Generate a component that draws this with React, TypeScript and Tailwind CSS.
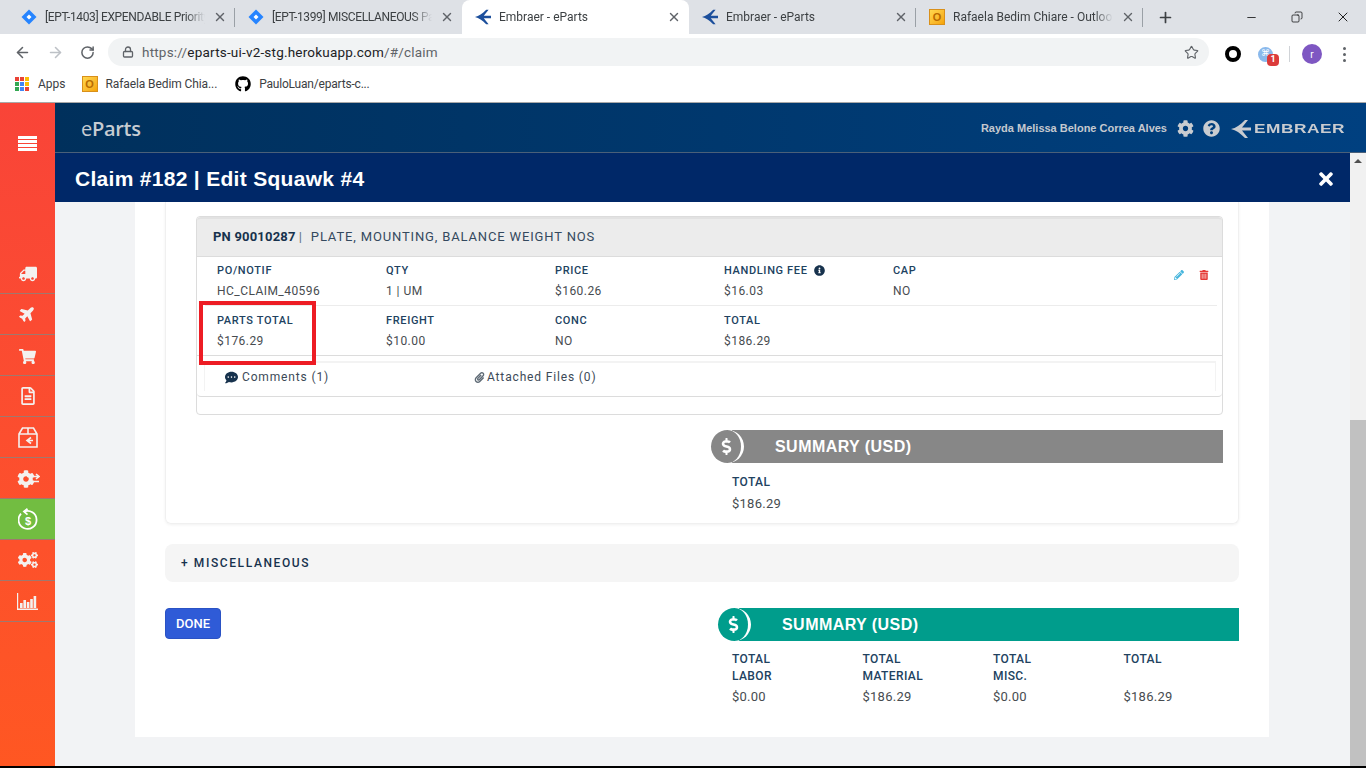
import type { ReactNode } from "react";
import { ArrowLeft, ArrowRight, RotateCw, Lock, Star, X, Plus, Minus, Copy } from "lucide-react";
import {
  FaTruck, FaPlane, FaShoppingCart, FaRegFileAlt, FaCog, FaCogs,
  FaQuestionCircle, FaTimes, FaInfoCircle, FaPencilAlt, FaTrashAlt, FaCommentDots, FaPaperclip, FaGithub, FaDollarSign,
} from "react-icons/fa";

function JiraIcon() {
  return (
    <svg width="16" height="16" viewBox="0 0 16 16" className="shrink-0">
      <path d="M8 0.5 15.5 8 8 15.5 0.5 8Z" fill="#2684ff" />
      <path d="M8 5.5 10.5 8 8 10.5 5.5 8Z" fill="#fff" />
    </svg>
  );
}

function EmbraerArrow({ color = "#1c4f9c", className = "w-4 h-4" }: { color?: string; className?: string }) {
  return (
    <svg viewBox="0 0 20 18" className={`${className} shrink-0`}>
      <path d="M0 9 C5 8 9 5 14 0 H17 L11 7.5 H20 V10.5 H11 L17 18 H14 C9 13 5 10 0 9Z" fill={color} />
    </svg>
  );
}

function OutlookIcon() {
  return (
    <span className="w-4 h-4 shrink-0 flex items-center justify-center border border-[#d9901a] bg-gradient-to-br from-[#ffd84d] to-[#f5a400] text-[11px] font-bold text-[#b86a00] font-['Liberation_Sans',sans-serif]">
      O
    </span>
  );
}

function Tab({ icon, title, active, sep, tight }: { icon: ReactNode; title: string; active?: boolean; sep?: boolean; tight?: boolean }) {
  return (
    <div className={`relative w-[227px] h-[34px] flex items-center pl-[13px] pr-[8px] gap-[8px] shrink-0 ${active ? "bg-white rounded-t-lg" : ""}`}>
      {icon}
      <span className={`flex-1 overflow-hidden whitespace-nowrap text-xs text-[#3c4043] [mask-image:linear-gradient(to_right,black_88%,transparent)] ${tight ? "tracking-[-0.35px]" : ""}`}>
        {title}
      </span>
      <X size={14} strokeWidth={2.4} className="text-[#5f6368] shrink-0" />
      {sep && <span className="absolute right-0 top-[8px] h-[19px] w-px bg-[#9aa0a6]" />}
    </div>
  );
}

function BrowserChrome() {
  return (
    <div className="shrink-0 font-['Roboto',sans-serif]">
      <div className="h-[34px] bg-[#dee1e6] flex items-center pl-[8px]">
        <Tab icon={<JiraIcon />} title="[EPT-1403] EXPENDABLE Priority" sep tight />
        <Tab icon={<JiraIcon />} title="[EPT-1399] MISCELLANEOUS Parts" tight />
        <Tab icon={<EmbraerArrow />} title="Embraer - eParts" active />
        <Tab icon={<EmbraerArrow />} title="Embraer - eParts" sep />
        <Tab icon={<OutlookIcon />} title="Rafaela Bedim Chiare - Outlook" sep />
        <Plus size={17} strokeWidth={2.4} className="ml-[14px] text-[#3c4043]" />
        <div className="ml-auto flex items-center text-black">
          <span className="w-[46px] flex justify-center"><Minus size={13} strokeWidth={1.4} /></span>
          <span className="w-[46px] flex justify-center"><Copy size={12} strokeWidth={1.4} className="-scale-x-100" /></span>
          <span className="w-[46px] flex justify-center"><X size={16} strokeWidth={1.3} /></span>
        </div>
      </div>
      <div className="h-[32px] bg-white flex items-start">
        <div className="h-[28px] mt-[4px] flex items-center w-[108px] pl-[14px] gap-[16px]">
          <ArrowLeft size={17} strokeWidth={2.2} className="text-[#5f6368]" />
          <ArrowRight size={17} strokeWidth={2.2} className="text-[#bdc1c6]" />
          <RotateCw size={15} strokeWidth={2.4} className="text-[#5f6368]" />
        </div>
        <div className="mt-[4px] h-[28px] w-[1101px] rounded-full bg-[#f1f3f4] flex items-center pl-[14px] pr-[10px]">
          <Lock size={12} strokeWidth={2.6} className="text-[#5f6368]" />
          <span className="ml-[8px] text-[13.5px] text-[#5f6368] tracking-[0.2px]">
            <span>https://</span><span className="text-[#202124]">eparts-ui-v2-stg.herokuapp.com</span><span>/#/claim</span>
          </span>
          <Star size={15} strokeWidth={1.8} className="ml-auto text-[#5f6368]" />
        </div>
        <div className="flex items-center h-[28px] mt-[6px]">
          <span className="ml-[16px] w-[16px] h-[16px] rounded-full border-[4px] border-black" />
          <span className="relative ml-[17px] w-[15px] h-[15px] rounded-full bg-[#8ab9ec] flex items-center justify-center text-[9px] text-white">
            ⌘
            <span className="absolute left-[9px] top-[7px] w-[12px] h-[12px] bg-[#db3b3b] rounded-sm text-white text-[9px] font-bold flex items-center justify-center leading-none">1</span>
          </span>
          <span className="ml-[16px] w-px h-[16px] bg-[#d0d3d7]" />
          <span className="ml-[12px] w-[20px] h-[20px] rounded-full bg-[#7e57c2] text-white text-[10px] flex items-center justify-center">r</span>
          <span className="ml-[21px] flex flex-col gap-[3px]">
            <span className="w-[3px] h-[3px] rounded-full bg-[#5f6368]" />
            <span className="w-[3px] h-[3px] rounded-full bg-[#5f6368]" />
            <span className="w-[3px] h-[3px] rounded-full bg-[#5f6368]" />
          </span>
        </div>
      </div>
      <div className="h-[36px] bg-white flex items-center pl-[15px] text-xs text-[#3c4043] border-b border-[#a8a8a8] box-content">
        <span className="grid grid-cols-3 gap-[1px] w-[14px] h-[14px]">
          {["bg-[#ea4335]", "bg-[#ea4335]", "bg-[#fbbc05]", "bg-[#34a853]", "bg-[#4285f4]", "bg-[#fbbc05]", "bg-[#34a853]", "bg-[#4285f4]", "bg-[#ea4335]"].map((c, i) => (
            <span key={i} className={c} />
          ))}
        </span>
        <span className="ml-[9px]">Apps</span>
        <span className="ml-[16px]"><OutlookIcon /></span>
        <span className="ml-[8px] tracking-[-0.1px]">Rafaela Bedim Chia...</span>
        <FaGithub size={16} className="ml-[18px] text-black" />
        <span className="ml-[8px] tracking-[-0.2px]">PauloLuan/eparts-c...</span>
      </div>
    </div>
  );
}

function BoxArrowIcon() {
  return (
    <svg width="20" height="21" viewBox="0 0 20 21" fill="none" stroke="#f4f1ef" strokeWidth="1.6">
      <path d="M1 7 4.5 1h11L19 7v13H1Z" />
      <path d="M1 7h18M10 1v6" />
      <path d="M13 10.5 9 13.5l4 3M9.5 13.5H15" />
    </svg>
  );
}

function GearArrowsIcon() {
  return (
    <span className="relative inline-block w-[22px] h-[18px] mt-px">
      <FaCog size={18} className="text-[#f4f1ef] absolute left-0 top-0" />
      <svg width="14" height="12" viewBox="0 0 14 12" className="absolute left-[9px] top-[3px]" stroke="#f4f1ef" strokeWidth="1.6" fill="none">
        <path d="M1 3.5h12M10 1l3 2.5L10 6M13 8.5H3M6 6 3 8.5 6 11" />
      </svg>
    </span>
  );
}

function DollarCycleIcon() {
  return (
    <svg width="20" height="22" viewBox="0 0 20 22" fill="none" stroke="#fff" strokeWidth="1.8">
      <path d="M6 3.6A9 9 0 1 1 3 5.7" />
      <path d="M9.5 0.8 6 3.6l3.5 3" />
      <text x="10" y="16.5" textAnchor="middle" fontSize="11" fontWeight="700" fill="#fff" stroke="none" fontFamily="Liberation Sans, sans-serif">$</text>
    </svg>
  );
}

function BarsIcon() {
  return (
    <svg width="21" height="17" viewBox="0 0 21 17" fill="#f4f1ef">
      <path d="M0 0h1.2v15.6H21V17H0Z" />
      <rect x="3" y="10" width="2.6" height="5" />
      <rect x="6.4" y="7" width="2.6" height="8" />
      <rect x="9.8" y="9" width="2.6" height="6" />
      <rect x="13.2" y="6" width="2.6" height="9" />
      <rect x="16.6" y="3" width="2.6" height="12" />
    </svg>
  );
}

const navItems: { icon: ReactNode; active?: boolean }[] = [
  { icon: <FaTruck size={18} className="-scale-x-100 mt-0.5" /> },
  { icon: <FaPlane size={17} className="-rotate-45 -mt-0.5" /> },
  { icon: <FaShoppingCart size={17} className="mt-0.5" /> },
  { icon: <FaRegFileAlt size={18} /> },
  { icon: <BoxArrowIcon /> },
  { icon: <GearArrowsIcon /> },
  { icon: <DollarCycleIcon />, active: true },
  { icon: <FaCogs size={20} /> },
  { icon: <BarsIcon /> },
];

function Sidebar() {
  return (
    <aside className="w-[55px] shrink-0 bg-gradient-to-b from-[#f94438] to-[#ff5722] text-[#f4f1ef]">
      <div className="h-[150px] pt-[33px] flex justify-center">
        <div className="w-[19px] h-[15px] flex flex-col gap-px">
          <span className="h-[3px] bg-white" />
          <span className="h-[3px] bg-white" />
          <span className="h-[3px] bg-white" />
          <span className="h-[3px] bg-white" />
        </div>
      </div>
      {navItems.map((item, i) => (
        <div
          key={i}
          className={`h-[41px] flex items-center justify-center border-b border-[#a0786e] ${item.active ? "bg-[#72bd41]" : ""}`}
        >
          {item.icon}
        </div>
      ))}
    </aside>
  );
}

function Field({ label, value, children }: { label: ReactNode; value: string; children?: ReactNode }) {
  return (
    <div className="w-[169px] shrink-0">
      <div className="h-[15px] flex items-center gap-[6px] text-[11px] font-medium leading-none tracking-[0.65px] text-[#21425f]">
        {label}
        {children}
      </div>
      <div className="mt-[6px] h-[15px] text-xs leading-[15px] tracking-[0.45px] text-[#474c50]">{value}</div>
    </div>
  );
}

function SummaryBar({ color, className }: { color: string; className: string }) {
  return (
    <div className={`relative h-[33px] flex items-center ${className}`}>
      <div style={{ backgroundColor: color }} className="absolute left-[21px] right-0 top-0 bottom-0" />
      <span
        style={{ backgroundColor: color }}
        className="relative z-10 w-[33px] h-[33px] rounded-full border-r-[3px] border-white flex items-center justify-center text-white"
      >
        <FaDollarSign size={17} />
      </span>
      <span className="relative z-10 ml-[31px] text-base font-bold text-white tracking-[0.45px] font-['Liberation_Sans',sans-serif]">SUMMARY (USD)</span>
    </div>
  );
}

function PartCard() {
  return (
    <div className="relative h-[199px] rounded border border-[#dcdcdc] bg-white">
      <div className="h-[40px] pb-[2px] bg-[#ececec] border-b border-[#dcdcdc] border-t-2 border-t-[#e2e2e2] rounded-t flex items-center pl-[16px] text-[13px] text-[#17324d]">
        <b className="font-bold tracking-[0.2px]">PN 90010287</b>
        <span className="ml-[3px] mr-[9px] text-[#5d7183]">|</span>
        <span className="text-[#34495e] tracking-[0.85px]">PLATE, MOUNTING, BALANCE WEIGHT NOS</span>
      </div>
      <div className="h-[49px] ml-[8px] mr-[5px] pl-[12px] pt-[6px] flex border-b border-[#ececec]">
        <Field label="PO/NOTIF" value="HC_CLAIM_40596" />
        <Field label="QTY" value="1 | UM" />
        <Field label="PRICE" value="$160.26" />
        <Field label="HANDLING FEE" value="$16.03">
          <FaInfoCircle size={11} className="text-[#17324d]" />
        </Field>
        <Field label="CAP" value="NO" />
        <div className="ml-auto mr-[8px] mt-[7px] flex gap-[15px]">
          <FaPencilAlt size={10} className="text-[#45b5dc]" />
          <FaTrashAlt size={10} className="text-[#e53935]" />
        </div>
      </div>
      <div className="h-[49px] pt-[7px] pl-[20px] flex">
        <Field label="PARTS TOTAL" value="$176.29" />
        <Field label="FREIGHT" value="$10.00" />
        <Field label="CONC" value="NO" />
        <Field label="TOTAL" value="$186.29" />
      </div>
      <div className="h-[42px] rounded-b border-y border-[#dcdcdc] pt-[5px] pl-[7px] pr-[6px]">
        <div className="h-[30px] border-x border-[#f3f3f3] border-t-2 flex items-center pl-[20px] text-xs tracking-[0.85px] text-[#3c4a57]">
          <span className="w-[249px] flex items-center gap-[4px]">
            <FaCommentDots size={13} className="text-[#17324d]" />
            Comments (1)
          </span>
          <span className="flex items-center gap-[2px]">
            <FaPaperclip size={11} className="text-[#5f6b76]" />
            Attached Files (0)
          </span>
        </div>
      </div>
      <div className="absolute left-[2px] top-[84px] w-[117px] h-[64px] border-[4px] border-[#ed1c24]" />
    </div>
  );
}

function Modal() {
  return (
    <div className="flex-1 min-w-0 flex flex-col">
      <div className="h-[49px] shrink-0 bg-[#002868] flex items-center justify-between pl-[20px] pr-[14px] pt-[2px]">
        <h1 className="text-[21px] font-bold text-white tracking-[0.3px] font-['Liberation_Sans',sans-serif]">Claim #182 | Edit Squawk #4</h1>
        <FaTimes size={20} className="text-white" />
      </div>
      <div className="flex-1 bg-[#f2f3f5] pl-[80px]">
        <div className="w-[1134px] h-[535px] bg-white px-[30px]">
          <div className="h-[322px] rounded-b-md border-x border-b border-[#f0f0f0] shadow-[0_1px_3px_rgba(0,0,0,0.06)] pl-[30px] pr-[15px] pt-[14px]">
            <PartCard />
            <SummaryBar color="#878787" className="ml-[515px] mt-[15px]" />
            <div className="ml-[536px] mt-[12px]">
              <div className="text-xs font-medium leading-[15px] tracking-[0.4px] text-[#21425f]">TOTAL</div>
              <div className="mt-[6px] text-[13px] leading-[15px] tracking-[0.25px] text-[#474c50]">$186.29</div>
            </div>
          </div>
          <div className="mt-[20px] h-[38px] rounded-lg bg-[#f5f5f5] flex items-center pl-[16px] text-xs font-medium tracking-[1.6px] text-[#17324d]">
            + MISCELLANEOUS
          </div>
          <div className="mt-[26px] flex items-start">
            <button className="w-[56px] h-[31px] rounded bg-[#2f5bd7] text-[13px] font-medium text-white border border-[#2a52c4]">DONE</button>
            <div className="ml-[497px] w-[521px]">
              <SummaryBar color="#009d8c" className="w-[521px]" />
              <div className="mt-[10px] pl-[14px] grid grid-cols-[130.5px_130.5px_130.5px_130.5px] text-xs tracking-[0.4px]">
                {[
                  ["TOTAL", "LABOR", "$0.00"],
                  ["TOTAL", "MATERIAL", "$186.29"],
                  ["TOTAL", "MISC.", "$0.00"],
                  ["TOTAL", "", "$186.29"],
                ].map(([a, b, v], i) => (
                  <div key={i}>
                    <div className="h-[33px] font-medium leading-[16.5px] text-[#21425f]">
                      {a}
                      <br />
                      {b}
                    </div>
                    <div className="mt-[5px] text-[13px] leading-[15px] tracking-[0.25px] text-[#474c50]">{v}</div>
                  </div>
                ))}
              </div>
            </div>
          </div>
        </div>
      </div>
    </div>
  );
}

export default function App() {
  return (
    <div className="relative w-[1366px] h-[768px] overflow-hidden flex flex-col bg-white font-['Roboto',sans-serif]">
      <BrowserChrome />
      <div className="flex-1 min-h-0 flex">
        <Sidebar />
        <div className="flex-1 min-w-0 flex flex-col">
          <header className="h-[50px] shrink-0 bg-gradient-to-r from-[#00305c] to-[#004080] border-b border-[#4a6079] flex items-center pl-[26px] pr-[21px] pt-[2px]">
            <span className="text-xl text-[#c7ccd2] font-['Open_Sans',sans-serif] font-semibold tracking-[-0.3px]">
              <span className="font-normal">e</span>Parts
            </span>
            <span className="ml-auto text-[11px] font-bold text-[#c5c9cf] font-['Liberation_Sans',sans-serif]">Rayda Melissa Belone Correa Alves</span>
            <FaCog size={17} className="ml-[10px] text-[#c9ccd0]" />
            <FaQuestionCircle size={17} className="ml-[9px] text-[#c9ccd0]" />
            <EmbraerArrow color="#c9ccd0" className="ml-[11px] w-[20px] h-[20px]" />
            <span className="ml-[3px] text-[13px] font-bold text-[#c9ccd0] tracking-[0.4px] font-['Liberation_Sans',sans-serif] [transform:scaleX(1.33)] origin-left w-[91px]">EMBRAER</span>
          </header>
          <div className="flex-1 min-h-0 flex">
            <Modal />
            <div className="w-[16px] shrink-0 bg-[#f1f1f1] flex flex-col">
              <div className="h-[267px] pt-[6px] flex justify-center">
                <span className="w-0 h-0 border-x-[4px] border-x-transparent border-b-[4px] border-b-[#505050]" />
              </div>
              <div className="flex-1 bg-[#c1c1c1]" />
            </div>
          </div>
        </div>
      </div>
      <div className="absolute left-0 right-0 bottom-0 h-[2px] bg-black" />
    </div>
  );
}
